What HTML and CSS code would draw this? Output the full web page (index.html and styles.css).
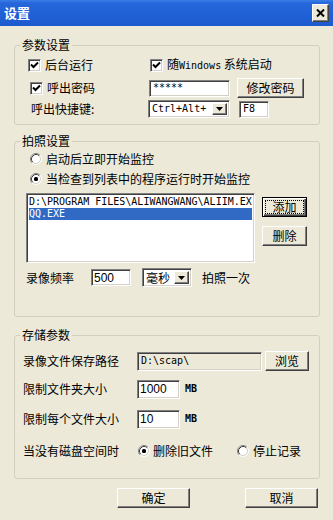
FILE: index.html
```html
<!DOCTYPE html>
<html lang="zh-CN">
<head>
<meta charset="utf-8">
<title>设置</title>
<link rel="stylesheet" href="styles.css">
</head>
<body>
<div class="window">
  <div class="titlebar">
    <span class="title">设置</span>
    <span class="close"><svg width="9" height="8" viewBox="0 0 9 8"><path d="M1 0.5 L8 7.5 M8 0.5 L1 7.5" stroke="#000" stroke-width="2"/></svg></span>
  </div>
  <div class="content">
    <fieldset class="group g1">
      <legend>参数设置</legend>
      <div class="body">
        <div class="row r1">
          <div class="c1"><span class="cb"><svg width="9" height="9" viewBox="0 0 9 9"><path d="M1 3.5 L3.5 6 L8 1.5" stroke="#000" stroke-width="2" fill="none"/></svg></span><span class="lbl">后台运行</span></div>
          <div class="c2"><span class="cb"><svg width="9" height="9" viewBox="0 0 9 9"><path d="M1 3.5 L3.5 6 L8 1.5" stroke="#000" stroke-width="2" fill="none"/></svg></span><span class="lbl">随<span class="mono">Windows</span> 系统启动</span></div>
        </div>
        <div class="row r2">
          <div class="c1 ind"><span class="cb"><svg width="9" height="9" viewBox="0 0 9 9"><path d="M1 3.5 L3.5 6 L8 1.5" stroke="#000" stroke-width="2" fill="none"/></svg></span><span class="lbl">呼出密码</span></div>
          <span class="input pwd mono">*****</span>
          <span class="btn btn-pwd">修改密码</span>
        </div>
        <div class="row r3">
          <div class="c1 ind3">呼出快捷键:</div>
          <span class="select sel-key"><span class="mono sel-text">Ctrl+Alt+</span><span class="arrow"><svg width="7" height="4" viewBox="0 0 7 4"><path d="M0 0 H7 L3.5 4 Z" fill="#000"/></svg></span></span>
          <span class="input key mono">F8</span>
        </div>
      </div>
    </fieldset>

    <fieldset class="group g2">
      <legend>拍照设置</legend>
      <div class="body">
        <div class="row rr">
          <span class="radio"><svg width="12" height="12" viewBox="0 0 12 12"><circle cx="6" cy="6" r="5" fill="#fff"/><path d="M2.11 9.89 A5.5 5.5 0 0 1 9.89 2.11" stroke="#808080" fill="none"/><path d="M9.89 2.11 A5.5 5.5 0 0 1 2.11 9.89" stroke="#fff" fill="none"/><path d="M2.82 9.18 A4.5 4.5 0 0 1 9.18 2.82" stroke="#404040" fill="none"/><path d="M9.18 2.82 A4.5 4.5 0 0 1 2.82 9.18" stroke="#D4D0C8" fill="none"/></svg></span>
          <span class="lbl">启动后立即开始监控</span>
        </div>
        <div class="row rr rr2">
          <span class="radio"><svg width="12" height="12" viewBox="0 0 12 12"><circle cx="6" cy="6" r="5" fill="#fff"/><path d="M2.11 9.89 A5.5 5.5 0 0 1 9.89 2.11" stroke="#808080" fill="none"/><path d="M9.89 2.11 A5.5 5.5 0 0 1 2.11 9.89" stroke="#fff" fill="none"/><path d="M2.82 9.18 A4.5 4.5 0 0 1 9.18 2.82" stroke="#404040" fill="none"/><path d="M9.18 2.82 A4.5 4.5 0 0 1 2.82 9.18" stroke="#D4D0C8" fill="none"/><rect x="4" y="4" width="4" height="4" rx="1.5" fill="#000"/></svg></span>
          <span class="lbl">当检查到列表中的程序运行时开始监控</span>
        </div>
        <div class="listrow">
          <div class="listbox">
            <div class="item mono">D:\PROGRAM FILES\ALIWANGWANG\ALIIM.EXE</div>
            <div class="item sel mono">QQ.EXE</div>
          </div>
          <div class="listbtns">
            <span class="btn btn-side default"><span class="focus">添加</span></span>
            <span class="btn btn-side">删除</span>
          </div>
        </div>
        <div class="row freq">
          <span class="flabel">录像频率</span>
          <span class="input num n500">500</span>
          <span class="select sel-unit"><span class="sel-text sans">毫秒</span><span class="arrow"><svg width="7" height="4" viewBox="0 0 7 4"><path d="M0 0 H7 L3.5 4 Z" fill="#000"/></svg></span></span>
          <span class="after">拍照一次</span>
        </div>
      </div>
    </fieldset>

    <fieldset class="group g3">
      <legend>存储参数</legend>
      <div class="body">
        <div class="row srow">
          <span class="slabel">录像文件保存路径</span>
          <span class="input path mono disabled">D:\scap\</span>
          <span class="btn btn-browse">浏览</span>
        </div>
        <div class="row srow s2">
          <span class="slabel">限制文件夹大小</span>
          <span class="input num size">1000</span>
          <span class="unit mono">MB</span>
        </div>
        <div class="row srow s3">
          <span class="slabel">限制每个文件大小</span>
          <span class="input num size">10</span>
          <span class="unit mono">MB</span>
        </div>
        <div class="row s4">
          <span class="slabel">当没有磁盘空间时</span>
          <span class="radio r-a"><svg width="12" height="12" viewBox="0 0 12 12"><circle cx="6" cy="6" r="5" fill="#fff"/><path d="M2.11 9.89 A5.5 5.5 0 0 1 9.89 2.11" stroke="#808080" fill="none"/><path d="M9.89 2.11 A5.5 5.5 0 0 1 2.11 9.89" stroke="#fff" fill="none"/><path d="M2.82 9.18 A4.5 4.5 0 0 1 9.18 2.82" stroke="#404040" fill="none"/><path d="M9.18 2.82 A4.5 4.5 0 0 1 2.82 9.18" stroke="#D4D0C8" fill="none"/><rect x="4" y="4" width="4" height="4" rx="1.5" fill="#000"/></svg></span>
          <span class="rlbl">删除旧文件</span>
          <span class="radio r-b"><svg width="12" height="12" viewBox="0 0 12 12"><circle cx="6" cy="6" r="5" fill="#fff"/><path d="M2.11 9.89 A5.5 5.5 0 0 1 9.89 2.11" stroke="#808080" fill="none"/><path d="M9.89 2.11 A5.5 5.5 0 0 1 2.11 9.89" stroke="#fff" fill="none"/><path d="M2.82 9.18 A4.5 4.5 0 0 1 9.18 2.82" stroke="#404040" fill="none"/><path d="M9.18 2.82 A4.5 4.5 0 0 1 2.82 9.18" stroke="#D4D0C8" fill="none"/></svg></span>
          <span class="rlbl">停止记录</span>
        </div>
      </div>
    </fieldset>

    <div class="actions">
      <span class="btn btn-main">确定</span>
      <span class="btn btn-main">取消</span>
    </div>
  </div>
</div>
</body>
</html>
```
FILE: styles.css
```css
* { box-sizing: border-box; }
html, body { margin: 0; padding: 0; }
body {
  background: #ECE9D8;
  font-family: "Noto Sans CJK SC", "Noto Sans", sans-serif;
  font-size: 12px;
  line-height: 14px;
  color: #000;
}
.window {
  width: 333px;
  height: 520px;
  background: #ECE9D8;
  overflow: hidden;
}
.titlebar {
  height: 26px;
  background: linear-gradient(#3C7FE8 0, #2566DA 3px, #1F60D6 60%, #1B59CE 100%);
  display: flex;
  align-items: center;
  justify-content: space-between;
  padding: 0 4px 0 4px;
}
.title {
  color: #fff;
  font-weight: bold;
  font-size: 13px;
  line-height: 16px;
}
.close {
  width: 17px;
  height: 18px;
  background: #ECE9D8;
  border: 1px solid;
  border-color: #fff #404040 #404040 #fff;
  box-shadow: inset -1px -1px #808080;
  display: flex;
  align-items: center;
  justify-content: center;
}
.content {
  padding: 12px 13px 0 14px;
}
.group {
  margin: 0;
  padding: 0;
  border: 1px solid #D0D0BF;
  border-radius: 3px;
  min-width: 0;
}
.group legend {
  margin-left: 5px;
  padding: 0 2px;
  line-height: 14px;
  height: 14px;
}
.g2 { margin-top: 9px; }
.g3 { margin-top: 11px; }
.g1 .body { padding: 5px 12px 6px 13px; }
.g2 .body { padding: 3px 0 29px 11px; }
.g3 .body { padding: 9px 10px 19px 8px; }

.row { display: flex; align-items: center; }
.mono { font-family: "DejaVu Sans Mono", "Liberation Mono", monospace; font-size: 10px; }
.sans { font-family: "Noto Sans CJK SC", sans-serif; font-size: 12px; }

.cb {
  width: 13px; height: 13px;
  background: #fff;
  border: 1px solid;
  border-color: #808080 #fff #fff #808080;
  box-shadow: inset 1px 1px #404040, inset -1px -1px #D4D0C8;
  display: inline-flex;
  align-items: center;
  justify-content: center;
  flex: none;
}
.cb svg { display: block; }
.lbl { margin-left: 4px; white-space: nowrap; }
.c1 { width: 120px; display: flex; align-items: center; flex: none; white-space: nowrap; }
.c1.ind { padding-left: 2px; }
.c1.ind3 { padding-left: 3px; }
.c2 { display: flex; align-items: center; margin-left: 2px; }
.r1 { height: 16px; }
.r2 { height: 20px; margin-top: 5px; }
.r3 { height: 18px; margin-top: 2px; }

.input {
  background: #fff;
  border: 1px solid;
  border-color: #808080 #fff #fff #808080;
  box-shadow: inset 1px 1px #404040, inset -1px -1px #D4D0C8;
  display: inline-flex;
  align-items: center;
  padding-left: 3px;
  flex: none;
  white-space: nowrap;
  overflow: hidden;
}
.input.disabled { background: #ECE9D8; }
.num { font-family: "Liberation Sans", Arial, sans-serif; font-size: 12px; padding-left: 2px; }
.pwd { margin-left: 1px; width: 81px; height: 17px; }
.key { margin-left: 9px; width: 30px; height: 17px; }

.btn {
  background: #ECE9D8;
  border: 1px solid;
  border-color: #fff #404040 #404040 #fff;
  box-shadow: inset -1px -1px #808080;
  display: inline-flex;
  align-items: center;
  justify-content: center;
  flex: none;
  white-space: nowrap;
}
.btn.default {
  border: 1px solid #000;
  box-shadow: inset 1px 1px #fff, inset -1px -1px #404040, inset -2px -2px #808080;
}
.focus {
  display: flex; align-items: center; justify-content: center;
  width: 37px; height: 12px;
  outline: 1px dotted #000;
}
.btn-pwd { width: 67px; height: 20px; margin-left: 7px; }

.select {
  background: #fff;
  border: 1px solid;
  border-color: #808080 #fff #fff #808080;
  box-shadow: inset 1px 1px #404040, inset -1px -1px #D4D0C8;
  display: inline-flex;
  align-items: stretch;
  padding: 2px;
  flex: none;
}
.sel-text { flex: 1; display: flex; align-items: center; padding-left: 1px; white-space: nowrap; }
.arrow {
  width: 15px;
  background: #ECE9D8;
  border: 1px solid;
  border-color: #fff #404040 #404040 #fff;
  box-shadow: inset -1px -1px #808080;
  display: flex;
  align-items: center;
  justify-content: center;
}
.sel-key { width: 82px; height: 18px; }

.rr { height: 16px; padding-left: 4px; }
.rr2 { margin-top: 4px; }
.radio { width: 12px; height: 12px; flex: none; display: inline-flex; }
.radio svg { display: block; }

.listrow { display: flex; margin-top: 6px; }
.listbox {
  width: 229px; height: 70px;
  background: #fff;
  border: 1px solid;
  border-color: #808080 #fff #fff #808080;
  box-shadow: inset 1px 1px #404040, inset -1px -1px #D4D0C8;
  padding: 2px 2px 0 2px;
  overflow: hidden;
}
.item { height: 12px; line-height: 12px; white-space: nowrap; overflow: hidden; padding-left: 0; }
.item.sel { background: #316AC5; color: #fff; }
.listbtns { display: flex; flex-direction: column; gap: 9px; padding-top: 4px; margin-left: 7px; }
.btn-side { width: 45px; height: 20px; }

.freq { height: 19px; margin-top: 5px; }
.flabel { width: 65px; flex: none; }
.n500 { width: 40px; height: 17px; }
.sel-unit { width: 50px; height: 19px; margin-left: 11px; }
.after { margin-left: 10px; }

.slabel { width: 114px; flex: none; white-space: nowrap; }
.srow { height: 20px; }
.path { width: 125px; height: 19px; }
.btn-browse { width: 44px; height: 20px; margin-left: 3px; }
.s2 { margin-top: 8px; }
.s3 { margin-top: 10px; }
.size { width: 43px; height: 19px; }
.unit { margin-left: 5px; font-weight: bold; }
.s4 { height: 16px; margin-top: 14px; }
.r-a { margin-left: 1px; }
.rlbl { margin-left: 3px; white-space: nowrap; }
.r-b { margin-left: 24px; }
.s4 .rlbl:last-child { margin-left: 4px; }

.actions {
  display: flex;
  justify-content: flex-end;
  gap: 55px;
  margin-top: 9px;
  padding-right: 2px;
}
.btn-main { width: 73px; height: 20px; }
```
